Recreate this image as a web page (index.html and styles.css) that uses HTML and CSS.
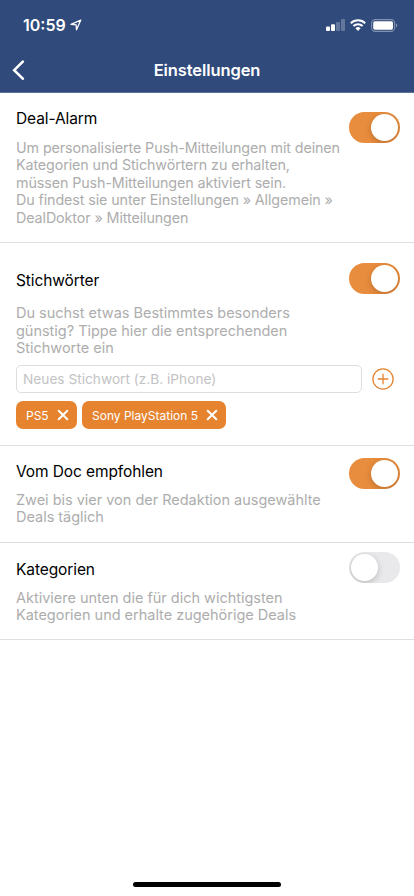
FILE: index.html
```html
<!DOCTYPE html>
<html lang="de">
<head>
<meta charset="utf-8">
<meta name="viewport" content="width=device-width, initial-scale=1">
<title>Einstellungen</title>
<link rel="stylesheet" href="styles.css">
</head>
<body>
<div class="screen">
  <header class="header">
    <div class="status">
      <span class="time">10:59</span>
      <svg class="location" width="12" height="12" viewBox="0 0 12 12"><path d="M1 5.4 10.8 1.1 6.5 10.8 6.1 5.8Z" fill="none" stroke="#fff" stroke-width="1.3" stroke-linejoin="round"/></svg>
      <svg class="signal" width="19" height="12" viewBox="0 0 19 12"><g fill="#fff"><rect y="7.500" width="4" height="4.500" rx="1"/><rect x="5" y="5.300" width="4" height="6.700" rx="1"/><g opacity=".25"><rect x="10" y="3" width="4" height="9" rx="1"/><rect x="15" y="0" width="4" height="12" rx="1"/></g></g></svg>
      <svg class="wifi" width="16" height="12" viewBox="0 0 16 12"><g fill="none" stroke="#fff" stroke-width="2"><path d="M.8 4.300a10.300 10.300 0 0 1 14.400 0"/><path d="M3.400 7a6.600 6.600 0 0 1 9.200 0"/></g><path d="M5.400 9.200a3.800 3.800 0 0 1 5.200 0L8 11.900Z" fill="#fff"/></svg>
      <svg class="battery" width="27" height="13" viewBox="0 0 27 13"><rect x=".6" y=".6" width="23" height="11.800" rx="3.600" fill="none" stroke="#fff" stroke-opacity=".4" stroke-width="1.100"/><rect x="2.200" y="2.200" width="19.800" height="8.600" rx="1.700" fill="#fff"/><path d="M25 4.500v4c1.800-.7 1.800-3.300 0-4Z" fill="#fff" opacity=".4"/></svg>
    </div>
    <div class="nav">
      <svg class="back" width="13" height="20" viewBox="0 0 13 20"><path d="M10.800 1.700 2.200 10.200 10.800 18.700" fill="none" stroke="#fff" stroke-width="2.600" stroke-linecap="round"/></svg>
      <h1>Einstellungen</h1>
    </div>
  </header>
  <main>
    <section class="row alarm">
      <div class="copy">
        <h2>Deal-Alarm</h2>
        <p>Um personalisierte Push-Mitteilungen mit deinen<br>Kategorien und Stichwörtern zu erhalten,<br>müssen Push-Mitteilungen aktiviert sein.<br>Du findest sie unter Einstellungen » Allgemein »<br>DealDoktor » Mitteilungen</p>
      </div>
      <span class="toggle on"></span>
    </section>
    <section class="row keywords">
      <div class="copy">
        <h2>Stichwörter</h2>
        <p>Du suchst etwas Bestimmtes besonders<br>günstig? Tippe hier die entsprechenden<br>Stichworte ein</p>
        <div class="entry">
          <div class="field">Neues Stichwort (z.B. iPhone)</div>
          <svg class="add" width="22" height="22" viewBox="0 0 22 22"><g fill="none" stroke="#e5832f" stroke-width="1.300"><circle cx="11" cy="11" r="10.100"/><path d="M6.200 11h9.600M11 6.200v9.600" stroke-linecap="round"/></g></svg>
        </div>
        <div class="tags">
          <span class="tag ps5"><span>PS5</span><svg width="12" height="12" viewBox="0 0 12 12"><path d="m1.700 1.700 8.600 8.600m0-8.600-8.600 8.600" stroke="#fff" stroke-width="2" stroke-linecap="round"/></svg></span>
          <span class="tag sony"><span>Sony PlayStation 5</span><svg width="12" height="12" viewBox="0 0 12 12"><path d="m1.700 1.700 8.600 8.600m0-8.600-8.600 8.600" stroke="#fff" stroke-width="2" stroke-linecap="round"/></svg></span>
        </div>
      </div>
      <span class="toggle on"></span>
    </section>
    <section class="row doc">
      <div class="copy">
        <h2>Vom Doc empfohlen</h2>
        <p>Zwei bis vier von der Redaktion ausgewählte<br>Deals täglich</p>
      </div>
      <span class="toggle on"></span>
    </section>
    <section class="row categories">
      <div class="copy">
        <h2>Kategorien</h2>
        <p>Aktiviere unten die für dich wichtigsten<br>Kategorien und erhalte zugehörige Deals</p>
      </div>
      <span class="toggle"></span>
    </section>
  </main>
  <div class="home"></div>
</div>
</body>
</html>
```
FILE: styles.css
```css
* { box-sizing: border-box; }
body { margin: 0; background: #fff; font-family: Inter, "Liberation Sans", sans-serif; }
svg { display: block; flex: none; }
.screen { width: 414px; height: 896px; display: flex; flex-direction: column; overflow: hidden; }
.header { height: 93px; background: #2f4a7b; border-bottom: 1px solid #5a6f97; color: #fff; flex: none; }
.status { height: 48px; padding: 2px 16px 0 23px; display: flex; align-items: center; }
.time { font-size: 16px; font-weight: 600; width: 43px; white-space: nowrap; }
.location { margin-left: 4px; }
.signal { margin-left: auto; }
.wifi { margin-left: 5px; }
.battery { margin-left: 5px; }
.nav { height: 44px; display: grid; grid-template-columns: 60px 1fr 60px; align-items: center; }
.back { margin-left: 12px; }
h1 { margin: 0; font-size: 16.500px; font-weight: 600; text-align: center; letter-spacing: -.1px; }
main { flex: 1; }
.row { display: flex; align-items: flex-start; border-bottom: 1px solid #dfdfe0; padding: 0 14px 0 16px; }
.copy { width: 333px; flex: none; white-space: nowrap; }
.alarm { height: 150px; padding-top: 16px; }
.keywords { height: 203px; padding-top: 28px; }
.doc { height: 97px; padding-top: 16px; }
.categories { height: 97px; padding-top: 17px; }
h2 { margin: 0; font-size: 15.500px; line-height: 20px; font-weight: 400; color: #000; letter-spacing: -.1px; }
p { margin: 9px 0 0; font-size: 14.500px; line-height: 17.400px; color: #adadad; letter-spacing: -.02px; }
.alarm p { margin-top: 10px; font-size: 14.300px; letter-spacing: -.1px; }
.keywords p { margin-top: 13px; line-height: 17.700px; }
.toggle { width: 51px; height: 31px; flex: none; border-radius: 16px; background: #e9e9eb; padding: 2px; display: flex; overflow: hidden; }
.toggle::before { content: ""; width: 27px; height: 27px; border-radius: 50%; background: #fff; box-shadow: 0 2px 6px rgba(0,0,0,.2); }
.toggle.on { background: #e88c3d; justify-content: flex-end; }
.alarm .toggle { margin-top: 3px; }
.keywords .toggle { margin-top: -8px; }
.doc .toggle { margin-top: -4px; }
.categories .toggle { margin-top: -8px; }
.entry { display: flex; align-items: center; width: 380px; margin-top: 8px; }
.field { width: 346px; height: 28px; border: 1px solid #dedede; border-radius: 5px; padding-left: 6px; font-size: 13.700px; line-height: 26px; color: #c3c3c5; }
.add { margin-left: 10px; }
.tags { display: flex; gap: 5px; margin-top: 8px; }
.tag { height: 28px; background: #e5832f; border-radius: 7px; color: #fff; display: flex; align-items: center; justify-content: space-between; padding: 0 8px 0 10px; font-size: 12px; }
.ps5 { width: 61px; }
.sony { width: 144px; }
.home { width: 148px; height: 5px; border-radius: 3px; background: #000; margin: 0 auto 9px; flex: none; }
```
